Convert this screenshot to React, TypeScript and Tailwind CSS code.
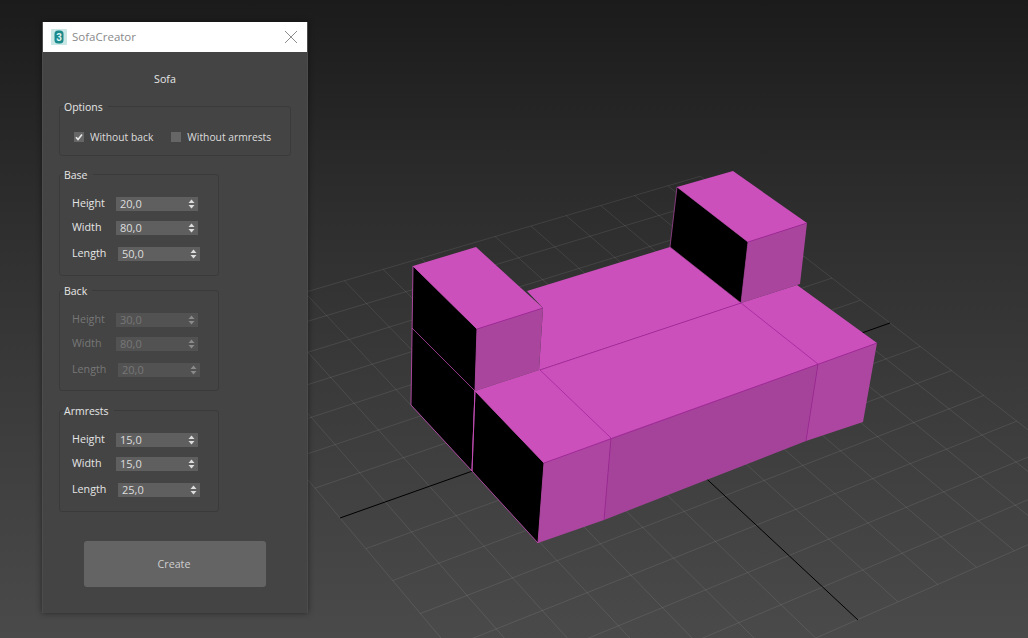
const FONT = "font-['Open_Sans','Liberation_Sans',sans-serif]";

// ground plane projection, eyeballed from the axis ends in the viewport
const project = (u: number, v: number): [number, number] => {
  const w = 1 + 0.0764 * u - 0.11 * v;
  return [636 + (273.4 * u + 197 * v) / w, 413 + (-96.9 * u + 184 * v) / w];
};

function GridLines() {
  const lines = [];
  const n = 7;
  for (let i = -n; i <= n; i++) {
    if (i === 0) continue;
    const t = i / n;
    const a = project(t, -1);
    const b = project(t, 1);
    const c = project(-1, t);
    const d = project(1, t);
    lines.push(<line key={`u${i}`} x1={a[0]} y1={a[1]} x2={b[0]} y2={b[1]} />);
    lines.push(<line key={`v${i}`} x1={c[0]} y1={c[1]} x2={d[0]} y2={d[1]} />);
  }
  return <g stroke="#ffffff" strokeOpacity="0.09" strokeWidth="1">{lines}</g>;
}

function Viewport() {
  return (
    <svg className="absolute inset-0" width="1028" height="638" viewBox="0 0 1028 638">
      <defs>
        <linearGradient id="bg" x1="0" y1="0" x2="0" y2="1">
          <stop offset="0" stopColor="#1b1b1b" />
          <stop offset="0.3" stopColor="#2c2c2c" />
          <stop offset="0.6" stopColor="#3a3a3a" />
          <stop offset="1" stopColor="#4a4a4a" />
        </linearGradient>
      </defs>
      <rect width="1028" height="638" fill="url(#bg)" />
      <GridLines />
      <g stroke="#000" strokeWidth="1">
        <line x1="340" y1="518" x2="890" y2="323" />
        <line x1="636" y1="413" x2="858" y2="620" />
      </g>
      {/* sofa */}
      <g strokeLinejoin="round">
        <polygon points="413,266 477,329 475,391 472,471 411,405" fill="#000" stroke="#cb50bc" strokeWidth="0.8" />
        <polygon points="475,391 544,463 538,543 472,471" fill="#000" stroke="#cb50bc" strokeWidth="0.8" />
        <polygon points="527,291 670,247 741,303 539,370 543,308" fill="#cb50bc" />
        <polygon points="677,187 748,242 741,303 670,247" fill="#000" stroke="#cb50bc" strokeWidth="0.6" />
        <polygon points="748,242 807,223 800,284 741,303" fill="#aa459e" />
        <polygon points="677,187 733,171 807,223 748,242" fill="#cb50bc" />
        <polygon points="477,329 543,308 539,370 475,391" fill="#aa459e" />
        <polygon points="413,266 476,247 543,308 477,329" fill="#cb50bc" />
        <polygon points="475,391 539,370 741,303 797,285 877,343 544,463" fill="#cb50bc" />
        <polygon points="544,463 611,438 604,520 538,543" fill="#ac46a0" />
        <polygon points="611,438 818,364 806,441 604,520" fill="#a5439a" />
        <polygon points="818,364 877,343 863,422 806,441" fill="#ac46a0" />
      </g>
      <g stroke="#cb50bc" strokeWidth="0.7" fill="none">
        <line x1="412" y1="328" x2="475" y2="391" />
        <line x1="475" y1="391" x2="472" y2="471" />
      </g>
      <g stroke="#a0209a" strokeWidth="0.7" fill="none">
        <line x1="540" y1="370" x2="741" y2="303" />
        <line x1="540" y1="370" x2="611" y2="438" />
        <line x1="741" y1="303" x2="818" y2="364" />
        <line x1="544" y1="463" x2="877" y2="343" />
        <line x1="611" y1="438" x2="604" y2="520" />
        <line x1="818" y1="364" x2="806" y2="441" />
        <line x1="477" y1="329" x2="543" y2="308" />
        <line x1="748" y1="242" x2="807" y2="223" />
      </g>
    </svg>
  );
}

function Spinner({ value, disabled, shift }: { value: string; disabled?: boolean; shift?: boolean }) {
  return (
    <div
      className={`flex h-[14px] w-[82px] items-center justify-between pl-[4px] pr-[3px] text-[11px] ${
        shift ? "ml-[2px]" : ""
      } ${disabled ? "bg-[#525252] text-[#777777]" : "bg-[#5f5f5f] text-[#dddddd]"}`}
    >
      <span className="leading-[14px]">{value}</span>
      <svg width="7" height="10" viewBox="0 0 7 10" fill={disabled ? "#8a8a8a" : "#dddddd"}>
        <path d="M3.5 0.5 6.5 4H0.5Z" />
        <path d="M3.5 9.5 0.5 6H6.5Z" />
      </svg>
    </div>
  );
}

function Row({ label, value, disabled, className = "", shift }: { label: string; value: string; disabled?: boolean; className?: string; shift?: boolean }) {
  return (
    <div className={`flex h-[14px] items-center ${className}`}>
      <span className={`w-[44px] pl-[12px] box-content -mt-[2px] text-[10.7px] leading-[14px] ${disabled ? "text-[#777777]" : "text-[#e6e6e6]"}`}>
        {label}
      </span>
      <Spinner value={value} disabled={disabled} shift={shift} />
    </div>
  );
}

function Group({ title, values, disabled, className = "" }: { title: string; values: string[]; disabled?: boolean; className?: string }) {
  return (
    <div className={`relative w-[160px] rounded-[3px] border border-[#3a3a3a] pt-[22px] ${className}`}>
      <span className="absolute -top-[7px] left-[4px] bg-[#444444] pr-[5px] text-[10.5px] leading-[14px] text-[#e6e6e6]">{title}</span>
      <Row label="Height" value={values[0]} disabled={disabled} />
      <Row label="Width" value={values[1]} disabled={disabled} className="mt-[10px]" />
      <Row label="Length" value={values[2]} disabled={disabled} className="mt-[12px]" shift />
    </div>
  );
}

function Checkbox({ checked, label }: { checked?: boolean; label: string }) {
  return (
    <div className="flex items-center gap-[6px]">
      <div className="flex h-[10px] w-[10px] items-center justify-center bg-[#666666]">
        {checked && (
          <svg width="8" height="8" viewBox="0 0 8 8" fill="none" stroke="#e8e8e8" strokeWidth="1.6">
            <path d="M1 4.2 3 6.4 7 1.4" />
          </svg>
        )}
      </div>
      <span className="text-[10.3px] leading-[14px] text-[#dcdcdc]">{label}</span>
    </div>
  );
}

export default function App() {
  return (
    <div className={`relative h-[638px] w-[1028px] overflow-hidden bg-[#333333] pl-[42px] pt-[22px] ${FONT}`}>
      <Viewport />
      <div className="relative flex h-[591px] w-[266px] flex-col border-x border-[#4c4c4c] bg-[#444444] shadow-[0_0_6px_rgba(0,0,0,0.45)]">
        <div className="flex h-[30px] items-center justify-between bg-white pl-[8px] pr-[9px]">
          <div className="flex items-center gap-[5px]">
            <svg width="16" height="16" viewBox="0 0 16 16">
              <rect width="16" height="16" rx="1" fill="#c9e8e5" />
              <rect x="3.5" y="1.5" width="9" height="13" rx="3.5" fill="#1b8a8c" />
              <text x="8" y="12" textAnchor="middle" fontSize="10" fontWeight="700" fill="#dff3f1" fontFamily="Liberation Sans">3</text>
            </svg>
            <span className="text-[11.5px] text-[#8a8a8a]">SofaCreator</span>
          </div>
          <svg width="14" height="14" viewBox="0 0 14 14" stroke="#8c8c8c" strokeWidth="1" fill="none">
            <path d="M1 1 13 13M13 1 1 13" />
          </svg>
        </div>
        <div className="mt-[20px] pr-[20px] text-center text-[10.7px] leading-[14px] text-[#e6e6e6]">Sofa</div>
        <div className="flex flex-col pl-[16px]">
          <div className="relative mt-[20px] flex h-[50px] w-[232px] items-center gap-[18px] rounded-[3px] border border-[#3a3a3a] pl-[14px] pt-[11px]">
            <span className="absolute -top-[7px] left-[4px] bg-[#444444] pr-[5px] text-[10.5px] leading-[14px] text-[#e6e6e6]">Options</span>
            <Checkbox checked label="Without back" />
            <Checkbox label="Without armrests" />
          </div>
          <Group title="Base" values={["20,0", "80,0", "50,0"]} className="mt-[18px] h-[102px]" />
          <Group title="Back" values={["30,0", "80,0", "20,0"]} disabled className="mt-[14px] h-[101px]" />
          <Group title="Armrests" values={["15,0", "15,0", "25,0"]} className="mt-[19px] h-[102px]" />
          <button className={`ml-[25px] mt-[29px] h-[46px] w-[182px] rounded-[3px] bg-[#646464] pr-[2px] text-[10.7px] text-[#cfcfcf] ${FONT}`}>
            Create
          </button>
        </div>
      </div>
    </div>
  );
}
